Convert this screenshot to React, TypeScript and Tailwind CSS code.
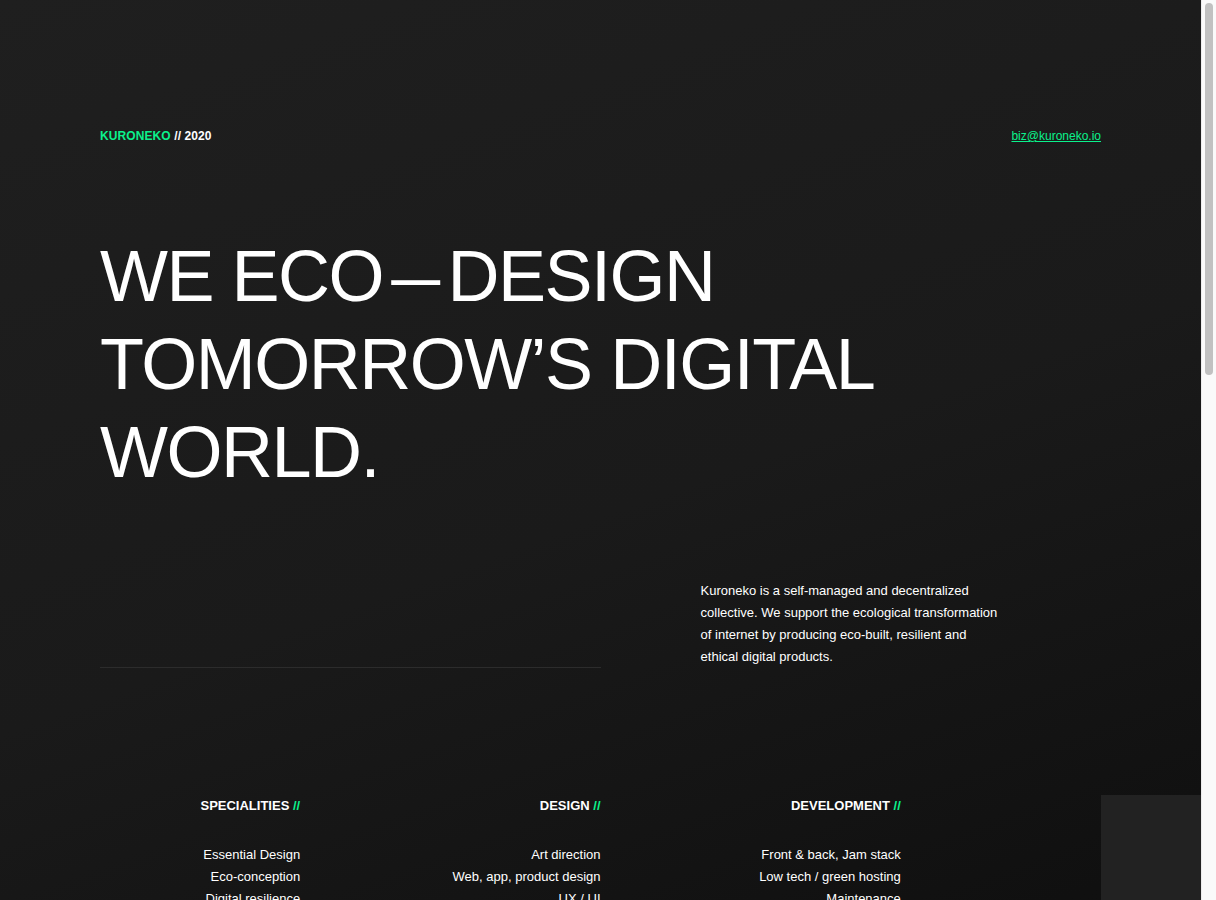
import React from "react";

const font = { fontFamily: '"Liberation Sans", Arial, Helvetica, sans-serif' };

function Column({ title, items, span }: { title: string; items: string[]; span: string }) {
  return (
    <div className={`${span} flex flex-col items-end text-right`}>
      <h3 className="text-[13px] font-bold uppercase leading-[20px] text-white">
        {title} <span className="text-[#0af28c]">//</span>
      </h3>
      <ul className="mt-[28px] flex flex-col text-[13px] leading-[22px] text-white">
        {items.map((i) => (
          <li key={i}>{i}</li>
        ))}
      </ul>
    </div>
  );
}

export default function App() {
  return (
    <div style={font} className="relative min-h-[1400px] w-full bg-[#fafafa]">
      <div className="mr-[15px] min-h-[1400px] bg-[linear-gradient(160deg,#1f1f1f_0%,#1a1a1a_40%,#101010_70%,#0c0c0c_100%)] text-white">
        <div className="px-[100px] pt-[127px]">
          <header className="flex items-center justify-between">
            <div className="text-[12px] font-bold leading-[18px] tracking-[0.1px]">
              <span className="text-[#0af28c]">KURONEKO</span> <span className="text-white">// 2020</span>
            </div>
            <a href="#" className="text-[12px] leading-[18px] text-[#0af28c] underline">
              biz@kuroneko.io
            </a>
          </header>

          <h1 className="mt-[87px] text-[72px] font-normal leading-[88px] tracking-[-1.5px] text-white">
            WE ECO<span className="mx-[-3px] inline-block scale-x-[0.68]">—</span>DESIGN
            <br />
            TOMORROW’S DIGITAL
            <br />
            WORLD.
          </h1>

          <section className="mt-[84px] grid grid-cols-10">
            <div className="col-span-5 flex items-end">
              <div className="h-px w-full bg-[#2c2c2c]" />
            </div>
            <p className="col-span-3 col-start-7 text-[13px] leading-[22px] text-white">
              Kuroneko is a self-managed and decentralized collective. We support the ecological transformation of internet
              by producing eco-built, resilient and ethical digital products.
            </p>
          </section>

          <section className="mt-[128px] grid grid-cols-10 pb-[200px]">
            <Column
              span="col-span-2"
              title="SPECIALITIES"
              items={["Essential Design", "Eco-conception", "Digital resilience", "Ethical tech"]}
            />
            <Column
              span="col-span-3"
              title="DESIGN"
              items={["Art direction", "Web, app, product design", "UX / UI", "Branding"]}
            />
            <Column
              span="col-span-3"
              title="DEVELOPMENT"
              items={["Front & back, Jam stack", "Low tech / green hosting", "Maintenance", "Audit"]}
            />
          </section>
        </div>
      </div>

      <div className="fixed bottom-0 right-[15px] h-[105px] w-[100px] bg-[#222222]" />

      <div className="fixed right-0 top-0 h-screen w-[15px] border-l border-[#ececec] bg-[#fafafa]">
        <div className="absolute left-[3px] top-[3px] h-[372px] w-[8px] rounded-full bg-[#c1c1c1]" />
      </div>
    </div>
  );
}
